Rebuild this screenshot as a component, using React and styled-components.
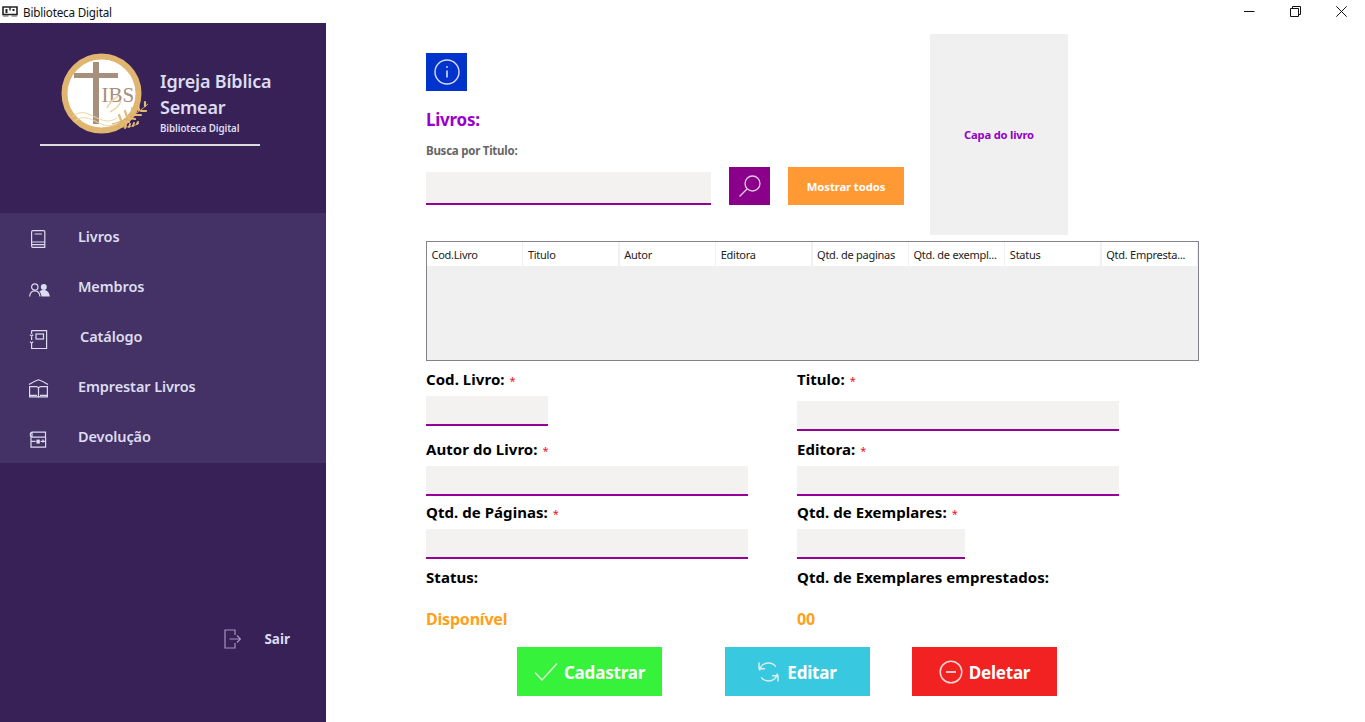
import React from 'react';
import styled, { createGlobalStyle } from 'styled-components';

const Global = createGlobalStyle`
  html, body { margin: 0; padding: 0; background: #fff; }
  body { font-family: "Noto Sans", "Open Sans", sans-serif; }
  * { box-sizing: border-box; }
`;

const Page = styled.div`
  width: 1365px;
  height: 722px;
  display: flex;
  flex-direction: column;
  overflow: hidden;
`;

/* barra da janela */
const TitleBar = styled.div`
  height: 23px;
  display: flex;
  align-items: center;
  padding-left: 2px;
  background: #fff;
`;
const TitleText = styled.span`
  margin-left: 5px;
  font-size: 11.7px;
  letter-spacing: -0.2px;
  color: #111;
`;
const WinControls = styled.div`
  margin-left: auto;
  display: flex;
  padding-right: 18px;
  gap: 35px;
  svg { display: block; }
`;

const Body = styled.div`
  flex: 1;
  display: flex;
`;

/* menu lateral */
const Sidebar = styled.aside`
  width: 326px;
  background: #372157;
  color: #dcdcf0;
  display: flex;
  flex-direction: column;
`;
const Brand = styled.div`
  height: 190px;
  padding-top: 27px;
`;
const BrandRow = styled.div`
  display: flex;
  padding-left: 55px;
  gap: 5px;
`;
const BrandText = styled.div`
  padding-top: 19px;
  display: flex;
  flex-direction: column;
`;
const BrandName = styled.span`
  font-size: 18px;
  font-weight: 600;
  line-height: 25.5px;
  letter-spacing: -0.2px;
`;
const BrandSub = styled.span`
  font-size: 9.8px;
  font-weight: 600;
  line-height: 12px;
  margin-top: 3px;
  letter-spacing: -0.1px;
`;
const Divider = styled.div`
  width: 220px;
  height: 2px;
  margin: 4px 0 0 40px;
  background: #dcdcdc;
`;
const Menu = styled.nav`
  background: #443165;
  display: flex;
  flex-direction: column;
`;
const MenuItem = styled.div`
  height: 50px;
  display: flex;
  align-items: center;
  padding-left: 28px;
  gap: 28px;
  svg { display: block; flex: none; }
`;
const MenuLabel = styled.span`
  font-size: 14.5px;
  font-weight: 600;
  letter-spacing: -0.1px;
  line-height: 20px;
  margin-top: -4px;
  margin-left: ${(p) => p.$indent || 0}px;
`;
const Logout = styled.div`
  margin-top: 164px;
  height: 24px;
  display: flex;
  align-items: center;
  justify-content: flex-end;
  padding-right: 36px;
  gap: 23px;
  font-size: 13.5px;
  font-weight: 700;
  svg { display: block; }
`;

/* conteudo */
const Main = styled.main`
  flex: 1;
  padding: 11px 0 0 100px;
`;
const TopRow = styled.div`
  display: flex;
  height: 201px;
`;
const SearchColumn = styled.div`
  width: 504px;
  padding-top: 19px;
`;
const InfoButton = styled.button`
  width: 41px;
  height: 38px;
  padding: 0;
  border: 0;
  background: #0033cc;
  display: flex;
  align-items: center;
  justify-content: center;
`;
const Heading = styled.h2`
  margin: 17px 0 0;
  font-size: 17px;
  line-height: 24px;
  font-weight: 700;
  letter-spacing: -0.25px;
  color: #9a00cc;
`;
const SearchLabel = styled.div`
  margin-top: 11px;
  font-size: 11.5px;
  line-height: 16px;
  font-weight: 700;
  letter-spacing: -0.25px;
  color: #666;
`;
const SearchRow = styled.div`
  margin-top: 8px;
  display: flex;
  align-items: flex-end;
  gap: 18px;
`;
const TextBox = styled.div`
  width: ${(p) => p.$w}px;
  height: ${(p) => p.$h || 30}px;
  margin-top: ${(p) => p.$top || 0}px;
  background: #f3f2f1;
  border-bottom: 2px solid #970097;
`;
const SearchButton = styled.button`
  width: 41px;
  height: 38px;
  padding: 0;
  border: 0;
  background: #8b008b;
  display: flex;
  align-items: center;
  justify-content: center;
`;
const ShowAllButton = styled.button`
  width: 116px;
  height: 38px;
  padding: 0;
  border: 0;
  background: #ff9933;
  color: #fff;
  font-family: inherit;
  font-size: 11.3px;
  font-weight: 700;
  letter-spacing: -0.1px;
`;
const Cover = styled.div`
  width: 138px;
  background: #f0f0f0;
  display: flex;
  align-items: center;
  justify-content: center;
  color: #9400c8;
  font-size: 11.2px;
  font-weight: 700;
  letter-spacing: -0.2px;
`;

const Table = styled.div`
  width: 773px;
  height: 120px;
  margin-top: 6px;
  border: 1px solid #83838f;
  background: #f0f0f0;
`;
const TableHead = styled.div`
  height: 24px;
  display: grid;
  grid-template-columns: repeat(8, 95px);
  column-gap: 1.4px;
`;
const HeadCell = styled.div`
  background: #fff;
  padding: 0 0 0 4.5px;
  display: flex;
  align-items: center;
  font-size: 11px;
  letter-spacing: -0.25px;
  color: #222;
  white-space: nowrap;
  overflow: hidden;
`;

const FormGrid = styled.div`
  display: grid;
  grid-template-columns: 371px 322px;
  grid-template-rows: 70px 63px 65px 41px 38px;
  margin-top: 9px;
`;
const Field = styled.div`
  display: flex;
  flex-direction: column;
`;
const FieldLabel = styled.label`
  height: 20px;
  line-height: 19px;
  font-size: 15px;
  font-weight: 700;
  letter-spacing: 0.05px;
  color: #000;
  white-space: nowrap;
`;
const Required = styled.span`
  color: #e81123;
  font-size: 11px;
  font-weight: 400;
  margin-left: 5px;
`;
const StatusValue = styled.div`
  height: 20px;
  line-height: 20px;
  font-size: 16px;
  font-weight: 700;
  letter-spacing: -0.2px;
  color: #ff9f1a;
`;

const Actions = styled.div`
  display: grid;
  grid-template-columns: 208px 187px 145px;
  padding-left: 91px;
`;
const ActionButton = styled.button`
  width: 145px;
  height: 49px;
  padding: 2px 0 0;
  border: 0;
  background: ${(p) => p.$bg};
  color: #fff;
  font-family: inherit;
  font-size: 17px;
  font-weight: 700;
  letter-spacing: -0.2px;
  display: flex;
  align-items: center;
  justify-content: center;
  gap: ${(p) => p.$gap || 6}px;
  svg { display: block; margin-top: -2px; }
`;

const line = { fill: 'none', stroke: '#dcdcf0', strokeWidth: 1.2 };

function AppIcon() {
  return (
    <svg width="16" height="11" viewBox="0 0 16 11">
      <path d="M1 1h14v7.5H1z" fill="none" stroke="#222" strokeWidth="1.6" />
      <path d="M3.5 3h2v4h-2zM10.5 3h2v2h-2z" fill="#222" />
      <path d="M8 1v3.5" stroke="#222" strokeWidth="1.4" />
      <path d="M1 10h5.5M9.5 10H15" stroke="#555" />
    </svg>
  );
}

function Logo() {
  return (
    <svg width="100" height="90" viewBox="0 0 100 90">
      <circle cx="46.5" cy="43.5" r="37" fill="#fff" stroke="#e0b56f" strokeWidth="6" />
      <rect x="38" y="12" width="6" height="62" fill="#a68f7c" />
      <rect x="19" y="23" width="44" height="5" fill="#a68f7c" />
      <text x="46.5" y="52" fontFamily="'Liberation Serif', serif" fontSize="21" fill="#a68f7c">IBS</text>
      <path d="M18 66c8-6 14-3 22 1s14 6 22 1M20 71c8-6 14-3 22 1s12 5 18 2" fill="none" stroke="#f0d5a6" strokeWidth="1" />
      <path d="M57 74c13-3 25-10 36-20" fill="none" stroke="#d9aa5f" strokeWidth="1" />
      <path d="M66 70l-2-5M72 67l-2-6M78 64l-1-6M84 60l-1-5M90 56l0-4M68 71l6 1M74 68l6 1M80 65l6 0M86 61l5 0" stroke="#e3b976" strokeWidth="2.2" strokeLinecap="round" />
      <path d="M62 76c8 2 16 1 22-3" fill="none" stroke="#d9aa5f" strokeWidth="1" />
      <path d="M66 77l1-2M70 78l1-3M74 77l1-3M78 76l1-3M82 74l1-2" stroke="#e3b976" strokeWidth="2" strokeLinecap="round" />
      <path d="M52 58c2-5 7-9 11-12M55 62c4-2 9-6 11-11" fill="none" stroke="#f0d5a6" strokeWidth="1.6" />
    </svg>
  );
}

function BookIcon() {
  return (
    <svg width="22" height="22" viewBox="0 0 22 22">
      <path d="M5 3.6h10.8a1 1 0 0 1 1 1v15.8H5a1.4 1.4 0 0 1-1.4-1.4V5A1.4 1.4 0 0 1 5 3.6z" {...line} />
      <path d="M6.5 7h7.5M3.6 15h13.2M3.6 17.6h13.2" {...line} />
    </svg>
  );
}
function MembersIcon() {
  return (
    <svg width="22" height="22" viewBox="0 0 22 22">
      <circle cx="6.8" cy="10" r="3.2" {...line} />
      <path d="M1.6 19.5c.4-3.6 2.4-5.6 5.2-5.6s4.8 2 5.2 5.6" {...line} />
      <circle cx="15.8" cy="10" r="3" fill="#dcdcf0" />
      <path d="M11.5 14.5c1.2-1 2.6-1.4 4.3-1.4 3.2 0 5.6 2.2 6 6.4h-8.2c-.3-2-1-3.8-2.1-5z" fill="#dcdcf0" />
    </svg>
  );
}
function CatalogIcon() {
  return (
    <svg width="22" height="22" viewBox="0 0 22 22">
      <path d="M3.6 3.6h15v18h-15V16M3.6 13v-3M3.6 7V3.6" {...line} />
      <path d="M2 7.6l1.6 1.6 1.6-1.6M2 14.6l1.6 1.6 1.6-1.6" {...line} />
      <rect x="8" y="7" width="7.5" height="5" {...line} />
    </svg>
  );
}
function OpenBookIcon() {
  return (
    <svg width="22" height="22" viewBox="0 0 22 22">
      <path d="M1.6 9.6h6.6c1 0 1.8.5 2.3 1.4.5-.9 1.3-1.4 2.3-1.4h6.6v10.2H1.6z" {...line} />
      <path d="M10.5 11v9.5M1.6 18.4h7.4M12 18.4h7.4" {...line} />
      <path d="M1 7.6c3-2.2 6-3.6 9.5-4.8 3.5 1.2 6.5 2.6 9.5 4.8" {...line} />
    </svg>
  );
}
function ReturnIcon() {
  return (
    <svg width="22" height="22" viewBox="0 0 22 22">
      <path d="M4 5.2h13.5v5H4zM4 5.2a2 2 0 0 0-1.6 2.5M2.4 7.5v1c0 1 .7 1.7 1.6 1.7" {...line} />
      <path d="M3 10.2v10h14.6v-10M2.4 14.4h5.2M12.6 14.4h5M15 12.5v3" {...line} />
      <rect x="8.4" y="12.6" width="3.4" height="4" fill="#dcdcf0" />
    </svg>
  );
}

export default function App() {
  const columns = ['Cod.Livro', 'Titulo', 'Autor', 'Editora', 'Qtd. de paginas', 'Qtd. de exempl...', 'Status', 'Qtd. Empresta...'];
  const menu = [
    { label: 'Livros', icon: <BookIcon /> },
    { label: 'Membros', icon: <MembersIcon /> },
    { label: 'Catálogo', icon: <CatalogIcon />, indent: 2 },
    { label: 'Emprestar Livros', icon: <OpenBookIcon /> },
    { label: 'Devolução', icon: <ReturnIcon /> },
  ];

  return (
    <Page>
      <Global />
      <TitleBar>
        <AppIcon />
        <TitleText>Biblioteca Digital</TitleText>
        <WinControls>
          <svg width="11" height="11" viewBox="0 0 11 11"><path d="M0 5.5h10.5" stroke="#111" /></svg>
          <svg width="11" height="11" viewBox="0 0 11 11" fill="none" stroke="#111"><path d="M.5 2.5h8v8h-8zM2.5 2.5v-2h8v8h-2" /></svg>
          <svg width="11" height="11" viewBox="0 0 11 11" stroke="#111"><path d="M.3.3l10.4 10.4M10.7.3L.3 10.7" /></svg>
        </WinControls>
      </TitleBar>
      <Body>
        <Sidebar>
          <Brand>
            <BrandRow>
              <Logo />
              <BrandText>
                <BrandName>Igreja Bíblica</BrandName>
                <BrandName>Semear</BrandName>
                <BrandSub>Biblioteca Digital</BrandSub>
              </BrandText>
            </BrandRow>
            <Divider />
          </Brand>
          <Menu>
            {menu.map((m) => (
              <MenuItem key={m.label}>
                {m.icon}
                <MenuLabel $indent={m.indent}>{m.label}</MenuLabel>
              </MenuItem>
            ))}
          </Menu>
          <Logout>
            <svg width="17" height="20" viewBox="0 0 17 20" fill="none" stroke="#a594bd" strokeWidth="1.2">
              <path d="M11 6V1H1v18h10v-5M5.5 10H16M13 6.5l3.5 3.5-3.5 3.5" />
            </svg>
            Sair
          </Logout>
        </Sidebar>
        <Main>
          <TopRow>
            <SearchColumn>
              <InfoButton>
                <svg width="28" height="28" viewBox="0 0 28 28" fill="none" stroke="#dcdcf0" strokeWidth="1.4">
                  <circle cx="14" cy="14" r="12" />
                  <path d="M14 12.5v7" strokeWidth="1.6" />
                  <path d="M14 8.2v1.6" strokeWidth="1.8" />
                </svg>
              </InfoButton>
              <Heading>Livros:</Heading>
              <SearchLabel>Busca por Titulo:</SearchLabel>
              <SearchRow>
                <TextBox $w={285} $h={33} />
                <SearchButton>
                  <svg width="24" height="24" viewBox="0 0 24 24" fill="none" stroke="#e0c8e0" strokeWidth="1.3">
                    <circle cx="14.5" cy="9.5" r="7.5" />
                    <path d="M9 15L1.5 22.5" strokeWidth="1.5" />
                  </svg>
                </SearchButton>
                <ShowAllButton>Mostrar todos</ShowAllButton>
              </SearchRow>
            </SearchColumn>
            <Cover>Capa do livro</Cover>
          </TopRow>

          <Table>
            <TableHead>
              {columns.map((c) => <HeadCell key={c}>{c}</HeadCell>)}
            </TableHead>
          </Table>

          <FormGrid>
            <Field>
              <FieldLabel>Cod. Livro:<Required>*</Required></FieldLabel>
              <TextBox $w={122} $top={6} />
            </Field>
            <Field>
              <FieldLabel>Titulo:<Required>*</Required></FieldLabel>
              <TextBox $w={322} $top={11} />
            </Field>
            <Field>
              <FieldLabel>Autor do Livro:<Required>*</Required></FieldLabel>
              <TextBox $w={322} $top={6} />
            </Field>
            <Field>
              <FieldLabel>Editora:<Required>*</Required></FieldLabel>
              <TextBox $w={322} $top={6} />
            </Field>
            <Field>
              <FieldLabel>Qtd. de Páginas:<Required>*</Required></FieldLabel>
              <TextBox $w={322} $top={6} />
            </Field>
            <Field>
              <FieldLabel>Qtd. de Exemplares:<Required>*</Required></FieldLabel>
              <TextBox $w={168} $top={6} />
            </Field>
            <FieldLabel>Status:</FieldLabel>
            <FieldLabel>Qtd. de Exemplares emprestados:</FieldLabel>
            <StatusValue>Disponível</StatusValue>
            <StatusValue>00</StatusValue>
          </FormGrid>

          <Actions>
            <ActionButton $bg="#36f23a">
              <svg width="24" height="20" viewBox="0 0 24 20" fill="none" stroke="#dff5df" strokeWidth="1.4"><path d="M1 10.5l7 7.5L23 1.5" /></svg>
              Cadastrar
            </ActionButton>
            <ActionButton $bg="#38c9e0" $gap={8}>
              <svg width="21" height="22" viewBox="0 0 21 22" fill="none" stroke="#dcecef" strokeWidth="1.5">
                <path d="M1.5 9.5C2.3 5 6 2 10.5 2c3 0 5.6 1.4 7.2 3.6M1 1.5v6h.2M19.5 12.5c-.8 4.5-4.5 7.5-9 7.5-3 0-5.6-1.4-7.2-3.6M20 20.5v-5.7h-6M1 7.8h6" />
              </svg>
              Editar
            </ActionButton>
            <ActionButton $bg="#f22222">
              <svg width="24" height="24" viewBox="0 0 24 24" fill="none" stroke="#f2d6d6" strokeWidth="1.5">
                <circle cx="12" cy="12" r="10.8" />
                <path d="M7 12h10" strokeWidth="1.8" />
              </svg>
              Deletar
            </ActionButton>
          </Actions>
        </Main>
      </Body>
    </Page>
  );
}
